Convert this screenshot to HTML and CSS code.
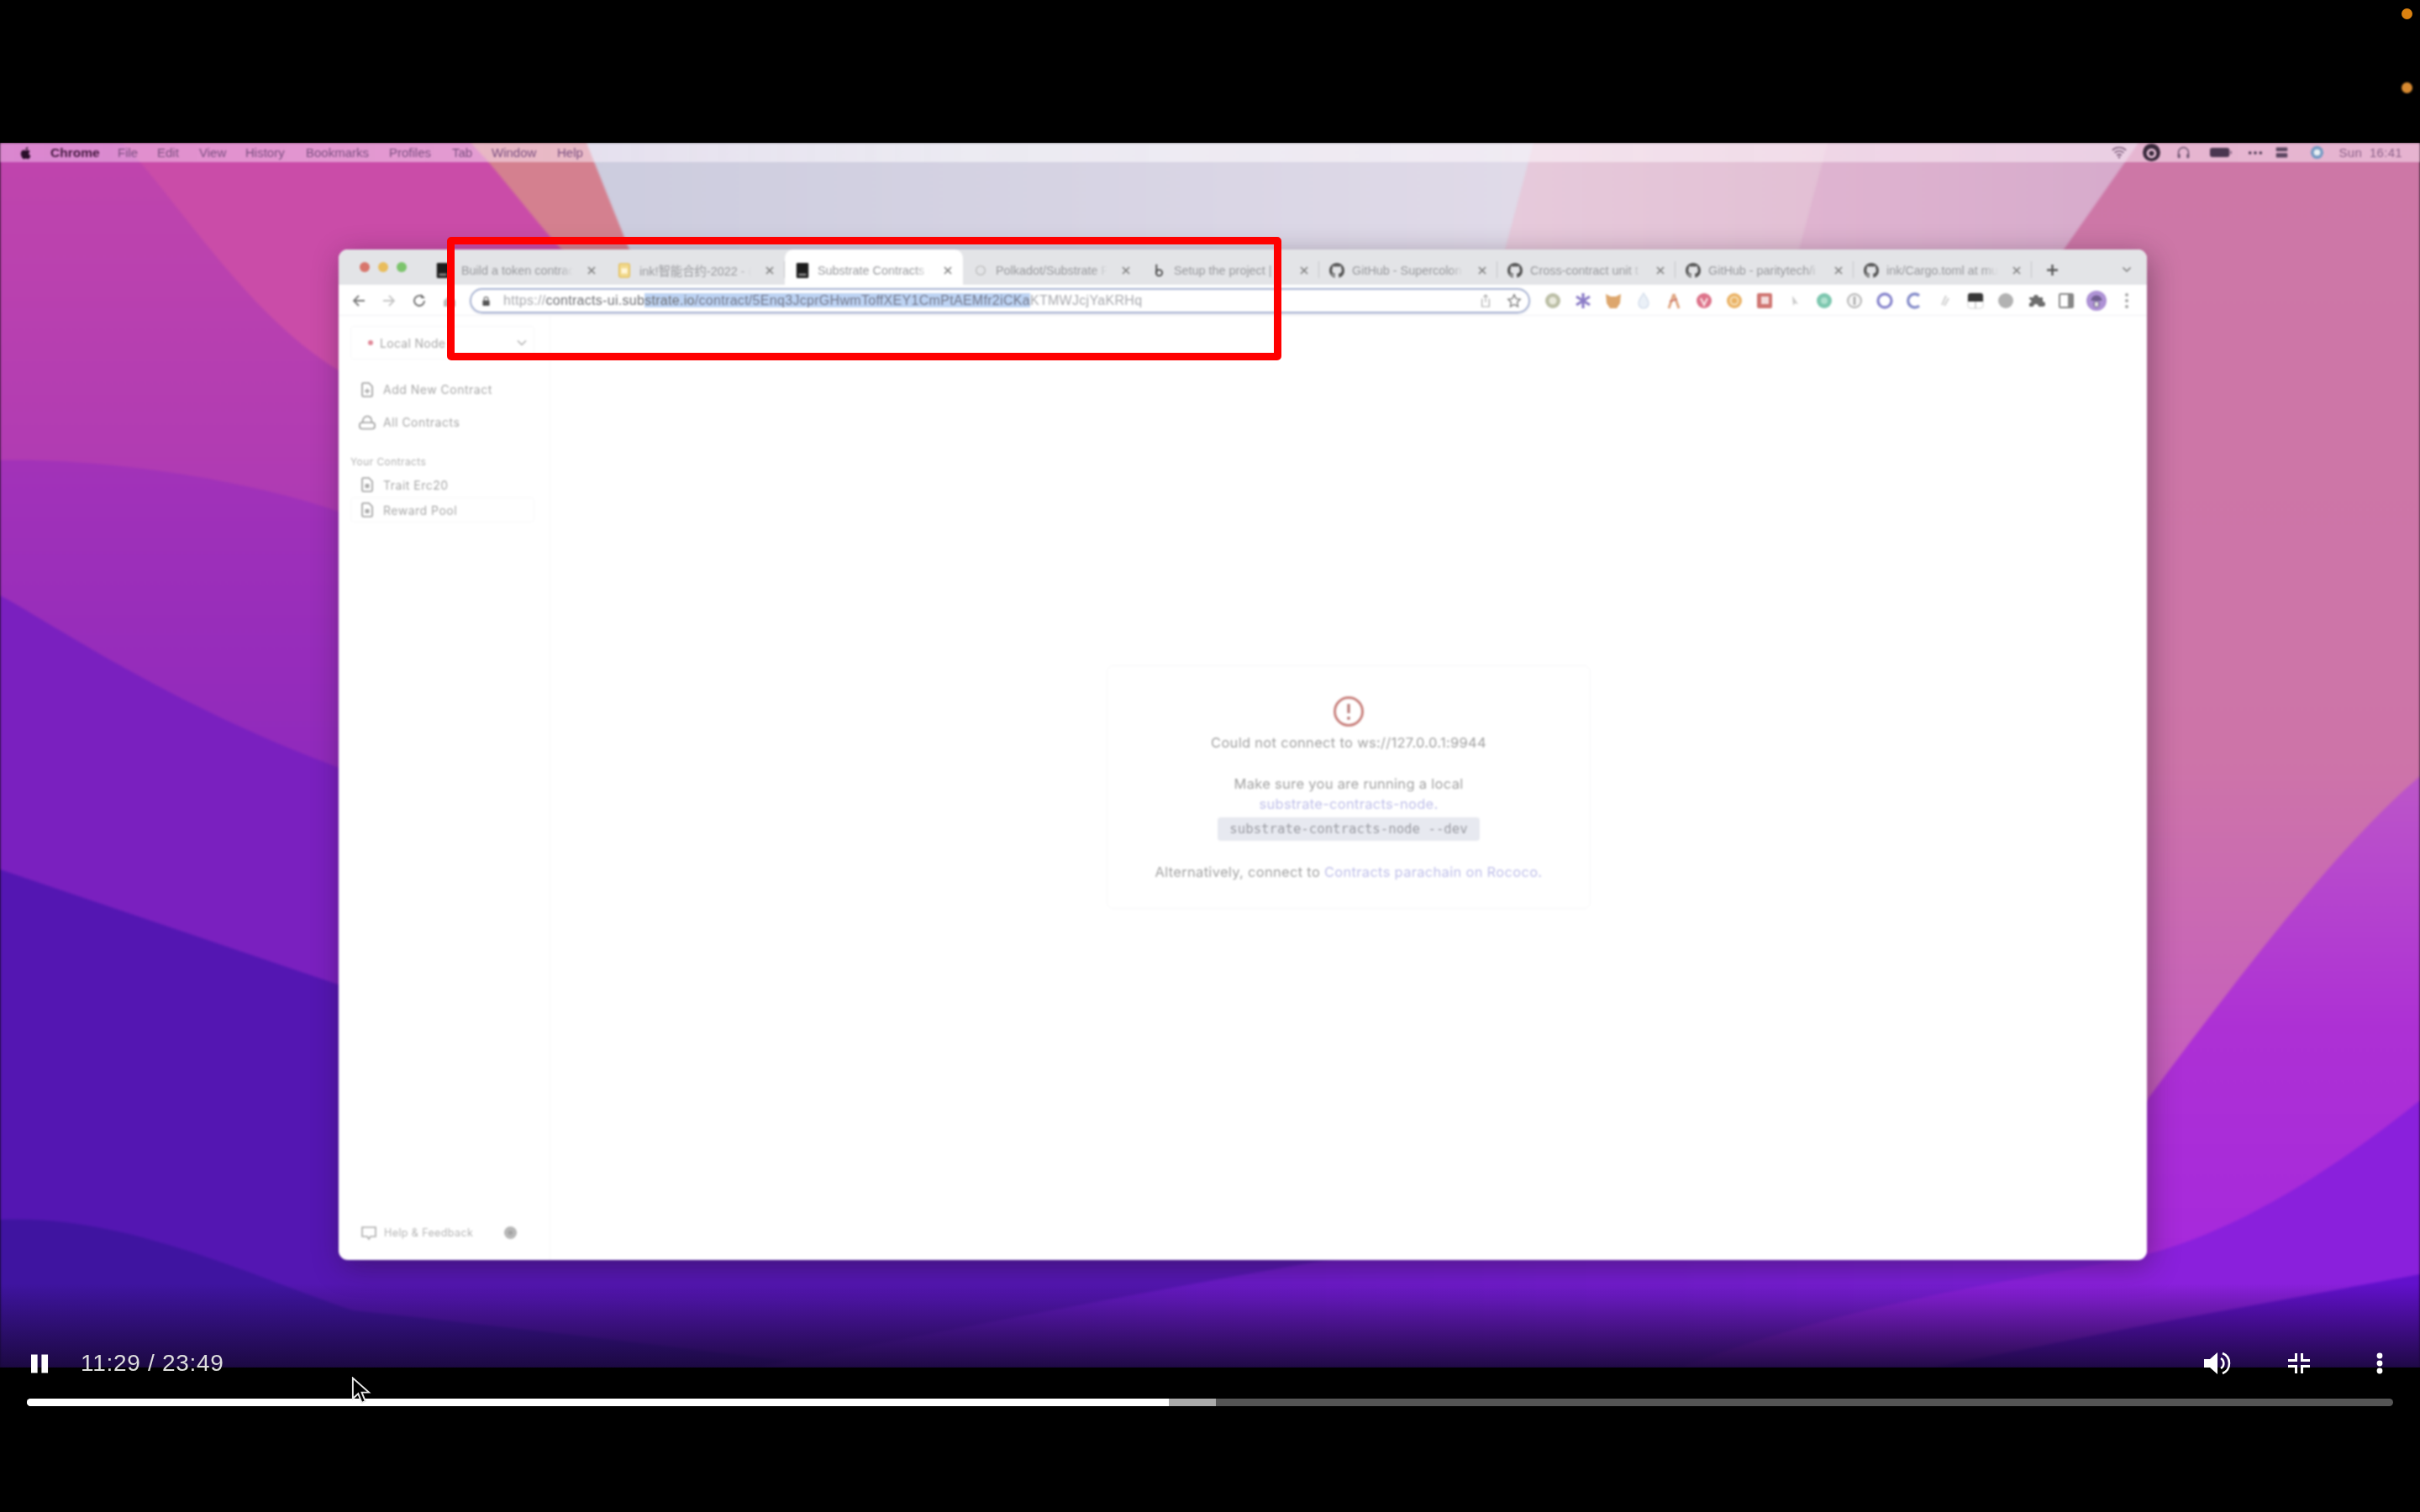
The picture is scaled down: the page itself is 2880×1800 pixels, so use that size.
FILE: index.html
```html
<!DOCTYPE html>
<html lang="en">
<head>
<meta charset="utf-8">
<title>Video player</title>
<link rel="stylesheet" href="styles.css">
</head>
<body>
<svg class="defs" width="0" height="0" aria-hidden="true">
  <symbol id="gh" viewBox="0 0 16 16"><path d="M8 0C3.58 0 0 3.58 0 8c0 3.54 2.29 6.53 5.47 7.59.4.07.55-.17.55-.38 0-.19-.01-.82-.01-1.49-2.01.37-2.53-.49-2.69-.94-.09-.23-.48-.94-.82-1.13-.28-.15-.68-.52-.01-.53.63-.01 1.08.58 1.23.82.72 1.21 1.87.87 2.33.66.07-.52.28-.87.51-1.07-1.78-.2-3.64-.89-3.64-3.95 0-.87.31-1.59.82-2.15-.08-.2-.36-1.02.08-2.12 0 0 .67-.21 2.2.82.64-.18 1.32-.27 2-.27.68 0 1.36.09 2 .27 1.53-1.04 2.2-.82 2.2-.82.44 1.1.16 1.92.08 2.12.51.56.82 1.27.82 2.15 0 3.07-1.87 3.75-3.65 3.95.29.25.54.73.54 1.48 0 1.07-.01 1.93-.01 2.2 0 .21.15.46.55.38A8.013 8.013 0 0016 8c0-4.42-3.58-8-8-8z" fill="#555"/></symbol>
  <symbol id="sub" viewBox="0 0 16 20"><rect width="16" height="20" rx="1.500" fill="#1c1c1c"/><rect x="3" y="14" width="10" height="3" fill="#8a8a8a"/></symbol>
  <symbol id="x" viewBox="0 0 12 12"><path d="M2 2l8 8M10 2l-8 8" stroke="#777" stroke-width="1.500" fill="none"/></symbol>
  <symbol id="doc" viewBox="0 0 20 20"><path d="M4 3.500A1.500 1.500 0 015.500 2H12l4 4v10.500a1.500 1.500 0 01-1.500 1.500h-9A1.500 1.500 0 014 16.500z" fill="none" stroke="#9a9a9a" stroke-width="1.600"/><rect x="7.500" y="9" width="5" height="5" rx="1" fill="#aaa"/></symbol>
</svg>

<main class="video">
  <svg class="wall" viewBox="0 170 2880 1458" preserveAspectRatio="none" aria-hidden="true">
    <defs>
      <linearGradient id="top" gradientUnits="userSpaceOnUse" x1="0" y1="170" x2="0" y2="1628"><stop offset="0" stop-color="#cd77a6"/><stop offset=".5" stop-color="#cd74a8"/><stop offset=".75" stop-color="#c65fbc"/><stop offset="1" stop-color="#c050c8"/></linearGradient>
      <linearGradient id="b2" x1="0" y1="0" x2="0" y2="1"><stop offset="0" stop-color="#c045ac"/><stop offset="1" stop-color="#a232b8"/></linearGradient>
      <linearGradient id="b3" x1="0" y1="0" x2="0" y2="1"><stop offset="0" stop-color="#a232b8"/><stop offset=".6" stop-color="#942bbb"/><stop offset="1" stop-color="#8c28bc"/></linearGradient>
      <linearGradient id="lav" x1="0" y1="0" x2="1" y2="0"><stop offset="0" stop-color="#ccccde"/><stop offset="1" stop-color="#e0dae8"/></linearGradient>
      <linearGradient id="pale" x1="0" y1="0" x2="1" y2="0"><stop offset="0" stop-color="#e6cadb"/><stop offset="1" stop-color="#e2bfd4"/></linearGradient>
      <linearGradient id="pale2" x1="0" y1="0" x2="1" y2="0"><stop offset="0" stop-color="#dfb4d0"/><stop offset="1" stop-color="#d6aacb"/></linearGradient>
      <linearGradient id="r1" x1="0" y1="0" x2="0" y2="1"><stop offset="0" stop-color="#bc56c8"/><stop offset=".5" stop-color="#ad30d4"/><stop offset="1" stop-color="#a528dc"/></linearGradient>
      <linearGradient id="mid" x1="0" y1="0" x2="1" y2="0"><stop offset="0" stop-color="#5a18bc"/><stop offset=".4" stop-color="#6c1ac8"/><stop offset="1" stop-color="#7c1fd8"/></linearGradient>
    </defs>
    <rect x="0" y="170" width="2880" height="1458" fill="url(#top)"/>
    <path d="M0 170H720V700H0Z" fill="#ca4ca8"/>
    <path d="M560 170H700L760 320H690C640 270 600 210 560 170Z" fill="#d4808f"/>
    <path d="M698 170H1830L1790 320H758Z" fill="url(#lav)"/>
    <path d="M1825 170H2180L2140 320H1785Z" fill="url(#pale)"/>
    <path d="M2175 170H2545L2440 320H2135Z" fill="url(#pale2)"/>
    <path d="M0 170H145C200 220 300 390 420 450V900H0Z" fill="url(#b2)"/>
    <path d="M0 548C120 545 300 570 420 615V1000H0Z" fill="url(#b3)"/>
    <path d="M0 709C60 740 200 840 420 920V1200H0Z" fill="#7a20bf"/>
    <path d="M0 1035L420 1178V1400H1900V1628H0Z" fill="#5416b2"/>
    <path d="M0 1452C150 1445 300 1520 420 1560C700 1590 850 1610 1000 1628H0Z" fill="#3f14a0"/>
    <path d="M900 1628C1200 1570 1450 1520 1700 1480H2560V1628Z" fill="url(#mid)"/>
    <path d="M2880 924C2790 1000 2680 1140 2540 1330V1520H2880Z" fill="url(#r1)"/>
    <path d="M2880 1310C2780 1390 2660 1470 2540 1497C2400 1525 2200 1550 2000 1628H2880Z" fill="#8a20dc"/>
    <path d="M2880 1517L2540 1580L2300 1628H2880Z" fill="#6210cc"/>
  </svg>
  <div class="fade"></div>

  <div class="screen">
    <header class="menubar">
      <svg class="apple" viewBox="0 0 24 24"><path d="M16.400 12.800c0-2.300 1.900-3.400 2-3.500-1.100-1.600-2.800-1.800-3.400-1.800-1.400-.1-2.800.9-3.500.9-.7 0-1.900-.8-3.100-.8-1.600 0-3.100.9-3.900 2.300-1.700 2.900-.4 7.200 1.200 9.500.8 1.200 1.800 2.400 3 2.400 1.200 0 1.700-.8 3.100-.8 1.500 0 1.900.8 3.200.8 1.300 0 2.100-1.200 2.900-2.300.9-1.300 1.300-2.600 1.300-2.700 0 0-2.800-1-2.800-4zM14 5.600c.7-.8 1.100-1.900 1-3-.9 0-2.100.6-2.700 1.400-.6.7-1.100 1.800-1 2.900 1 .1 2.100-.5 2.700-1.300z" fill="#2a0f2a"/></svg>
      <b class="menu-app">Chrome</b>
      <span>File</span><span>Edit</span><span>View</span><span>History</span><span>Bookmarks</span><span>Profiles</span><span>Tab</span><span>Window</span><span>Help</span>
      <div class="status">
        <svg class="st st-wifi" viewBox="0 0 20 16"><path d="M1 5a13 13 0 0118 0M4 8.500a8.500 8.500 0 0112 0M7 12a4 4 0 016 0" stroke="#7a5a78" stroke-width="1.800" fill="none"/><circle cx="10" cy="14.500" r="1.300" fill="#7a5a78"/></svg>
        <svg class="st st-circle" viewBox="0 0 22 22"><circle cx="11" cy="11" r="10" fill="#3a2a3c"/><circle cx="11" cy="12" r="5.500" fill="#f0c8e0"/><circle cx="11" cy="12" r="3" fill="#3a2a3c"/></svg>
        <svg class="st st-head" viewBox="0 0 20 20"><path d="M3 15V10a7 7 0 0114 0v5" fill="none" stroke="#6e5470" stroke-width="1.800"/><rect x="2" y="12" width="3.500" height="6" rx="1.500" fill="#6e5470"/><rect x="14.500" y="12" width="3.500" height="6" rx="1.500" fill="#6e5470"/></svg>
        <svg class="st st-batt" viewBox="0 0 28 14"><rect x="0" y="1" width="25" height="12" rx="3" fill="#4a3650"/><rect x="26" y="5" width="2" height="4" fill="#8a6a88"/></svg>
        <svg class="st st-dots" viewBox="0 0 20 6"><circle cx="3" cy="3" r="2" fill="#4a3650"/><circle cx="10" cy="3" r="2" fill="#4a3650"/><circle cx="17" cy="3" r="2" fill="#4a3650"/></svg>
        <svg class="st st-cc" viewBox="0 0 20 18"><rect x="1" y="1" width="18" height="6" rx="1" fill="#5a4560"/><rect x="1" y="10" width="18" height="7" rx="1" fill="#5a4560"/></svg>
        <svg class="st st-siri" viewBox="0 0 20 20"><circle cx="10" cy="10" r="9" fill="#7a9cc4"/><circle cx="10" cy="10" r="4.500" fill="#e8f0f4"/></svg>
        <span class="clock">Sun&nbsp; 16:41</span>
      </div>
    </header>

    <section class="window">
      <div class="tabstrip">
        <div class="lights"><i class="l-r"></i><i class="l-y"></i><i class="l-g"></i></div>
        <div class="tab tab-first"><svg class="fav"><use href="#sub"/></svg><span class="title">Build a token contrac</span><svg class="close"><use href="#x"/></svg></div>
        <div class="tab"><svg class="fav" viewBox="0 0 16 20"><rect x="1" y="1" width="14" height="18" rx="2" fill="#f1d98c" stroke="#e3bd58" stroke-width="1.500"/><rect x="4" y="7" width="8" height="7" fill="#fff6d8"/></svg><span class="title">ink!智能合约-2022 - (</span><svg class="close"><use href="#x"/></svg></div>
        <div class="tab tab-active"><svg class="fav"><use href="#sub"/></svg><span class="title">Substrate Contracts (</span><svg class="close"><use href="#x"/></svg></div>
        <div class="tab"><svg class="fav" viewBox="0 0 20 20"><circle cx="10" cy="10" r="6" fill="none" stroke="#bbb" stroke-width="1.500"/></svg><span class="title">Polkadot/Substrate P</span><svg class="close"><use href="#x"/></svg></div>
        <div class="tab"><svg class="fav" viewBox="0 0 20 20"><path d="M7 2v12" stroke="#444" stroke-width="2" fill="none"/><circle cx="10.500" cy="13" r="4" fill="none" stroke="#444" stroke-width="2"/></svg><span class="title">Setup the project | j</span><svg class="close"><use href="#x"/></svg></div>
        <div class="tab"><svg class="fav"><use href="#gh"/></svg><span class="title">GitHub - Supercolon</span><svg class="close"><use href="#x"/></svg></div>
        <div class="tab"><svg class="fav"><use href="#gh"/></svg><span class="title">Cross-contract unit t</span><svg class="close"><use href="#x"/></svg></div>
        <div class="tab"><svg class="fav"><use href="#gh"/></svg><span class="title">GitHub - paritytech/i</span><svg class="close"><use href="#x"/></svg></div>
        <div class="tab"><svg class="fav"><use href="#gh"/></svg><span class="title">ink/Cargo.toml at mu</span><svg class="close"><use href="#x"/></svg></div>
        <svg class="plus" viewBox="0 0 14 14"><path d="M7 1v12M1 7h12" stroke="#555" stroke-width="2.200"/></svg>
        <svg class="tabs-menu" viewBox="0 0 12 8"><path d="M1.500 1.500L6 6l4.500-4.500" stroke="#777" stroke-width="1.500" fill="none"/></svg>
      </div>

      <div class="toolbar">
        <svg class="nav" viewBox="0 0 20 20"><path d="M17 10H4M10 4l-6 6 6 6" stroke="#777" stroke-width="1.800" fill="none"/></svg>
        <svg class="nav" viewBox="0 0 20 20"><path d="M3 10h13M10 4l6 6-6 6" stroke="#c4c4c4" stroke-width="1.800" fill="none"/></svg>
        <svg class="nav" viewBox="0 0 20 20"><path d="M16 10a6 6 0 11-2-4.500" stroke="#666" stroke-width="1.800" fill="none"/><path d="M12 2v5h5z" fill="#666"/></svg>
        <svg class="nav" viewBox="0 0 20 20"><path d="M3 10l7-6 7 6v7H3z" fill="#bbb"/></svg>
        <div class="address">
          <svg class="lock" viewBox="0 0 12 14"><path d="M3.500 6V4a2.500 2.500 0 015 0v2" stroke="#555" stroke-width="1.200" fill="none"/><rect x="1.500" y="6" width="9" height="7" rx="1" fill="#555"/></svg>
          <span class="url"><span class="u-dim">https://</span><span class="u-host">contracts-ui.sub</span><span class="u-sel"><span class="u-host">strate.io</span>/contract/5Enq3JcprGHwmToffXEY1CmPtAEMfr2iCKa</span><span class="u-dim">KTMWJcjYaKRHq</span></span>
          <svg class="share" viewBox="0 0 16 20"><path d="M8 12V2M5 5l3-3 3 3M4 8H3v10h10V8h-1" stroke="#aaa" stroke-width="1.400" fill="none"/></svg>
          <svg class="star" viewBox="0 0 20 20"><path d="M10 2l2.500 5.300 5.500.7-4 4 1 5.800-5-2.800-5 2.800 1-5.800-4-4 5.500-.7z" stroke="#777" stroke-width="1.500" fill="none"/></svg>
        </div>
        <div class="exts">
          <svg class="ext" viewBox="0 0 22 22"><circle cx="11" cy="11" r="9" fill="#b3b79a"/><circle cx="11" cy="11" r="4.500" fill="#e6e6d8"/></svg>
          <svg class="ext" viewBox="0 0 22 22"><path d="M11 2v18M3 6l16 10M19 6L3 16" stroke="#7d6cc0" stroke-width="3.200"/></svg>
          <svg class="ext" viewBox="0 0 22 22"><path d="M2 3l6 3h6l6-3-1 11-4 6H7l-4-6z" fill="#d99a58"/></svg>
          <svg class="ext" viewBox="0 0 22 22"><path d="M11 2c3 5 6 8 6 12a6 6 0 01-12 0c0-4 3-7 6-12z" fill="#e8eef6" stroke="#c8d4e6" stroke-width="1.200"/></svg>
          <svg class="ext" viewBox="0 0 22 22"><path d="M11 3L5 20M11 3l6 17" stroke="#dc9a70" stroke-width="3"/><path d="M6 12l9-3" stroke="#c96a5a" stroke-width="2"/></svg>
          <svg class="ext" viewBox="0 0 22 22"><circle cx="11" cy="11" r="9" fill="#d9607a"/><path d="M7 8l4 8 4-8" stroke="#f8d8dc" stroke-width="2.400" fill="none"/></svg>
          <svg class="ext" viewBox="0 0 22 22"><circle cx="11" cy="11" r="9" fill="#e8a850"/><circle cx="11" cy="11" r="4.500" fill="none" stroke="#f7deb0" stroke-width="2"/></svg>
          <svg class="ext" viewBox="0 0 22 22"><rect x="2" y="2" width="18" height="18" rx="2" fill="#c9625e"/><rect x="7" y="6" width="9" height="9" fill="#f2d8d8"/></svg>
          <svg class="ext" viewBox="0 0 22 22"><path d="M8 5l7 10-4-1-2 3z" fill="#c4c4c4"/></svg>
          <svg class="ext" viewBox="0 0 22 22"><circle cx="11" cy="11" r="9" fill="#6cc0a4"/><circle cx="11" cy="11" r="4" fill="#a4dcc8"/></svg>
          <svg class="ext" viewBox="0 0 22 22"><circle cx="11" cy="11" r="8" fill="#f4f4f4" stroke="#aaa" stroke-width="2"/><path d="M11 6v10" stroke="#999" stroke-width="2.400"/></svg>
          <svg class="ext" viewBox="0 0 22 22"><circle cx="11" cy="11" r="8" fill="none" stroke="#7a78c8" stroke-width="3.400"/></svg>
          <svg class="ext" viewBox="0 0 22 22"><path d="M16 5a8 8 0 100 12" stroke="#7880c4" stroke-width="3.400" fill="none"/></svg>
          <svg class="ext" viewBox="0 0 22 22"><path d="M7 16L12 5M10 17l5-9" stroke="#d0d0d0" stroke-width="2.400"/></svg>
          <svg class="ext" viewBox="0 0 22 22"><rect x="2" y="2" width="18" height="18" rx="3" fill="#fff" stroke="#ccc"/><path d="M2 5a3 3 0 013-3h12a3 3 0 013 3v7H2z" fill="#1c1c1c"/><path d="M11 12v8" stroke="#999"/></svg>
          <svg class="ext" viewBox="0 0 22 22"><circle cx="11" cy="11" r="9" fill="#a8a8a8"/></svg>
          <svg class="ext" viewBox="0 0 22 22"><path d="M3 7h5a3 3 0 016 0h5v5a3 3 0 010 6H14a3 3 0 00-6 0H3v-4a2.500 2.500 0 000-5z" fill="#5a5a5a"/></svg>
          <svg class="ext" viewBox="0 0 22 22"><rect x="3" y="3" width="16" height="16" rx="1.500" fill="#fff" stroke="#777" stroke-width="2"/><rect x="13" y="3" width="6" height="16" fill="#777"/></svg>
          <svg class="ext ext-avatar" viewBox="0 0 26 26"><circle cx="13" cy="13" r="13" fill="#a384d0"/><path d="M6 13a7 7 0 0114 0" fill="#5e4a82"/><rect x="10" y="14" width="6" height="7" rx="1" fill="#ddd" stroke="#4a3a68"/></svg>
          <svg class="ext" viewBox="0 0 22 22"><circle cx="11" cy="4" r="2" fill="#999"/><circle cx="11" cy="11" r="2" fill="#999"/><circle cx="11" cy="18" r="2" fill="#999"/></svg>
        </div>
      </div>

      <div class="page">
        <aside class="sidebar">
          <div class="network"><i class="net-dot"></i><span>Local Node</span><svg class="net-chev" viewBox="0 0 12 8"><path d="M1 1.500L6 6.500l5-5" stroke="#aaa" stroke-width="1.300" fill="none"/></svg></div>
          <nav class="side-nav">
            <a class="item"><svg class="ico" viewBox="0 0 20 20"><path d="M4 3.500A1.500 1.500 0 015.500 2H12l4 4v10.500a1.500 1.500 0 01-1.500 1.500h-9A1.500 1.500 0 014 16.500z" fill="none" stroke="#9a9a9a" stroke-width="1.600"/><path d="M10 8.500v6M7 11.500h6" stroke="#999" stroke-width="1.400"/></svg>Add New Contract</a>
            <a class="item"><svg class="ico" viewBox="0 0 20 20"><path d="M4.500 10C4.500 5 7 2.500 10 2.500S15.500 5 15.500 10" fill="none" stroke="#9a9a9a" stroke-width="1.600"/><rect x="1" y="10" width="18" height="7.500" rx="3" fill="none" stroke="#9a9a9a" stroke-width="1.600"/></svg>All Contracts</a>
          </nav>
          <h2 class="side-head">Your Contracts</h2>
          <a class="item item-short"><svg class="ico"><use href="#doc"/></svg>Trait Erc20</a>
          <a class="item item-short item-current"><svg class="ico"><use href="#doc"/></svg>Reward Pool</a>
          <div class="side-foot">
            <span class="help"><svg class="ico" viewBox="0 0 20 20"><path d="M2 4h16v11h-6l-2 3-2-3H2z" fill="none" stroke="#aaa" stroke-width="1.600"/></svg>Help &amp; Feedback</span>
            <svg class="gear" viewBox="0 0 18 18"><circle cx="9" cy="9" r="8" fill="#b8b8b8"/><circle cx="9" cy="9" r="3" fill="#a4a4a4"/></svg>
          </div>
        </aside>
        <div class="main">
          <div class="card">
            <svg class="alert" viewBox="0 0 36 36"><circle cx="18" cy="18" r="16.500" fill="none" stroke="#c9827e" stroke-width="3"/><path d="M18 9v11" stroke="#b87a78" stroke-width="3.200"/><circle cx="18" cy="26" r="1.900" fill="#b87a78"/></svg>
            <p class="line l1">Could not connect to ws://127.0.0.1:9944</p>
            <p class="line l2">Make sure you are running a local</p>
            <p class="line l3"><a class="link">substrate-contracts-node.</a></p>
            <code class="cmd">substrate-contracts-node --dev</code>
            <p class="line l4">Alternatively, connect to <a class="link">Contracts parachain on Rococo.</a></p>
          </div>
        </div>
      </div>
    </section>
  </div>

  <div class="redbox"></div>
</main>

<div class="dot dot-a"></div>
<div class="dot dot-b"></div>

<div class="controls">
  <svg class="c-pause" viewBox="0 0 22 23"><rect x="0" y="0" width="8" height="23" fill="#fff"/><rect x="13" y="0" width="8" height="23" fill="#fff"/></svg>
  <span class="c-time">11:29 / 23:49</span>
  <svg class="c-vol" viewBox="0 0 32 28"><path d="M0 9h7l9-8v26l-9-8H0z" fill="#fff"/><path d="M20 8a7 7 0 010 12" stroke="#fff" stroke-width="2.500" fill="none"/><path d="M22 2a13 13 0 010 24" stroke="#fff" stroke-width="2.500" fill="none"/></svg>
  <svg class="c-fs" viewBox="0 0 26 24"><path d="M11 0v10H0V7h8V0zM15 0v10h11V7h-8V0zM11 24V14H0v3h8v7zM15 24V14h11v3h-8v7z" fill="#fff"/></svg>
  <svg class="c-more" viewBox="0 0 8 26"><circle cx="4" cy="4" r="3.400" fill="#fff"/><circle cx="4" cy="13" r="3.400" fill="#fff"/><circle cx="4" cy="22" r="3.400" fill="#fff"/></svg>
</div>
<div class="progress"><div class="buffered"></div><div class="played"></div></div>
<svg class="cursor" viewBox="0 0 22 31"><path d="M1.500 1.500v23l6-5.500 4 10 4-1.700-4-9.800h8z" fill="#000" stroke="#e8e8e8" stroke-width="1.800"/></svg>
</body>
</html>
```
FILE: styles.css
```css
* { box-sizing: border-box; }
html, body { margin: 0; padding: 0; }
body { width: 2880px; height: 1800px; background: #000; position: relative; overflow: hidden; padding-top: 170px; font-family: "Liberation Sans", Arial, sans-serif; }
.defs { position: absolute; }
.video { display: block; position: relative; width: 2880px; height: 1458px; overflow: hidden; }
.wall { position: absolute; inset: 0; width: 100%; height: 100%; filter: blur(1.500px); }
.fade { position: absolute; left: 0; right: 0; bottom: 0; height: 100px; background: linear-gradient(to bottom, rgba(24,8,56,0), rgba(24,8,56,.9)); }
.screen { position: relative; filter: blur(1px); }

/* mac menu bar */
.menubar { height: 23px; display: flex; align-items: center; background: linear-gradient(to right, rgba(255,225,255,.42), rgba(255,255,255,.55) 40%, rgba(255,240,250,.5)); color: #7b4f80; font-size: 15px; padding-left: 22px; }
.apple { width: 18px; height: 18px; margin-right: 20px; }
.menu-app { color: #43173f; font-size: 15.500px; width: 80px; }
.menubar > span:nth-of-type(1) { width: 47px; }
.menubar > span:nth-of-type(2) { width: 50px; }
.menubar > span:nth-of-type(3) { width: 55px; }
.menubar > span:nth-of-type(4) { width: 72px; }
.menubar > span:nth-of-type(5) { width: 99px; }
.menubar > span:nth-of-type(6) { width: 75px; }
.menubar > span:nth-of-type(7) { width: 47px; }
.menubar > span:nth-of-type(8) { width: 78px; }
.status { margin-left: auto; padding-right: 21px; display: flex; align-items: center; height: 23px; }
.st { flex: none; }
.st-wifi { width: 18px; height: 15px; margin-right: 18px; }
.st-circle { width: 23px; height: 23px; margin-right: 18px; }
.st-head { width: 17px; height: 17px; margin-right: 22px; }
.st-batt { width: 28px; height: 13px; margin-right: 18px; }
.st-dots { width: 18px; height: 6px; margin-right: 15px; }
.st-cc { width: 15px; height: 15px; margin-right: 26px; }
.st-siri { width: 17px; height: 17px; margin-right: 17px; }
.clock { color: #8a6088; font-size: 15px; white-space: nowrap; letter-spacing: .3px; }

/* browser window */
.window { width: 2152px; height: 1203px; margin: 104px 0 0 403px; background: #fff; border-radius: 11px; box-shadow: 4px 8px 34px rgba(40,20,40,.42); display: flex; flex-direction: column; overflow: hidden; }
.tabstrip { height: 42px; flex: none; background: #e3e4e7; display: flex; align-items: center; position: relative; padding-left: 107px; }
.lights { position: absolute; left: 25px; top: 15px; display: flex; gap: 10px; }
.lights i { display: block; width: 12px; height: 12px; border-radius: 50%; }
.l-r { background: #d8766c; }
.l-y { background: #e9bd5c; }
.l-g { background: #7cc46c; }
.tab { width: 212px; height: 42px; flex: none; padding: 7px 11px 0 12px; display: flex; align-items: center; gap: 9px; position: relative; }
.tab::after { content: ""; position: absolute; right: 0; top: 14px; height: 20px; width: 1px; background: #c4c5c9; }
.tab:nth-of-type(2)::after, .tab-active::after, .tab-active + .tab::after { background: transparent; }
.tab-active { background: #fff; border-radius: 10px 10px 0 0; }
.tab-first .fav { margin-left: -4px; margin-right: 4px; }
.fav { width: 18px; height: 18px; flex: none; }
.title { width: 133px; flex: none; white-space: nowrap; font-size: 14.400px; color: #98999d; font-family: "Liberation Sans", "Noto Sans CJK SC", sans-serif; -webkit-mask-image: linear-gradient(to right, #000 88%, transparent); mask-image: linear-gradient(to right, #000 88%, transparent); }
.close { width: 12px; height: 12px; flex: none; margin-left: 7px; }
.plus { width: 15px; height: 15px; margin: 6px 0 0 17px; flex: none; }
.tabs-menu { width: 12px; height: 8px; margin: 6px 0 0 75px; flex: none; }

.toolbar { height: 37px; flex: none; background: #fff; border-bottom: 1px solid #f1f1f3; display: flex; align-items: center; gap: 16px; padding: 2px 0 0 14px; }
.nav { width: 20px; height: 20px; flex: none; }
.address { width: 1262px; height: 30px; margin-left: -2px; border: 2px solid #a8b3d2; border-radius: 15px; display: flex; align-items: center; padding-left: 12px; flex: none; box-shadow: 0 1px 2px rgba(120,130,170,.3); }
.lock { width: 11px; height: 13px; flex: none; margin-right: 15px; }
.url { font-size: 16px; white-space: nowrap; color: #a2a3a8; flex: 1; letter-spacing: .3px; }
.u-host { color: #6e6f74; }
.u-sel { background: #bdd3f3; color: #74798c; }
.u-dim { color: #a8a9ae; }
.share { width: 14px; height: 18px; margin-right: 18px; flex: none; }
.star { width: 18px; height: 18px; margin-right: 8px; flex: none; }
.exts { display: flex; align-items: center; gap: 13.950px; opacity: .88; }
.ext { width: 22px; height: 22px; flex: none; }
.ext-avatar { width: 24px; height: 24px; margin: 0 -1px; }

/* app */
.page { flex: 1; display: flex; min-height: 0; }
.sidebar { width: 252px; flex: none; border-right: 1px solid #f7f7f9; padding: 12px 18px 21px 14px; display: flex; flex-direction: column; font-family: Inter, "Liberation Sans", sans-serif; color: #a8a8a8; font-size: 14px; }
.network { height: 40px; flex: none; border: 1px solid #f7f7f8; border-radius: 4px; display: flex; align-items: center; padding: 0 8px 0 20px; }
.net-dot { width: 6px; height: 6px; border-radius: 50%; background: #e08898; margin-right: 8px; }
.network span { flex: 1; letter-spacing: .3px; }
.net-chev { width: 12px; height: 8px; }
.side-nav { margin-top: 16px; display: flex; flex-direction: column; }
.item { height: 39px; flex: none; display: flex; align-items: center; gap: 9px; padding-left: 10px; letter-spacing: .5px; }
.item-short { height: 30px; }
.item-current { border: 1px solid #f8f8f9; border-radius: 4px; padding-left: 9px; }
.ico { width: 20px; height: 20px; flex: none; }
.side-head { margin: 20px 0 4px; height: 16px; font-size: 12px; line-height: 16px; font-weight: 400; color: #b0b0b0; letter-spacing: .4px; }
.side-foot { margin-top: auto; height: 24px; display: flex; align-items: center; justify-content: space-between; padding: 0 20px 0 12px; font-size: 12.500px; color: #b4b4b4; }
.help { display: flex; align-items: center; gap: 8px; letter-spacing: .4px; }
.gear { width: 17px; height: 17px; }
.main { flex: 1; display: flex; align-items: center; justify-content: center; padding-bottom: 2px; }
.card { width: 576px; height: 290px; border: 1px solid #f7f7f8; border-radius: 8px; padding-top: 36px; display: flex; flex-direction: column; align-items: center; font-family: Inter, "Liberation Sans", sans-serif; font-size: 16.500px; letter-spacing: .3px; color: #a2a2a2; }
.alert { width: 36px; height: 36px; flex: none; }
.line { margin: 0; height: 20px; line-height: 20px; white-space: nowrap; }
.l1 { margin-top: 9px; }
.l2 { margin-top: 29px; }
.l3 { margin-top: 4px; }
.l4 { margin-top: 27px; }
.link { color: #c0c0ea; }
.cmd { margin-top: 6px; height: 28px; line-height: 28px; padding: 0 14px; background: #e7e9f0; border-radius: 4px; font-family: "DejaVu Sans Mono", "Liberation Mono", monospace; font-size: 15.700px; letter-spacing: 0; color: #9a9ba2; }

/* overlays */
.redbox { position: absolute; left: 532px; top: 112px; width: 993px; height: 147px; border: 9px solid #f00; border-radius: 5px; }
.dot { position: absolute; left: 2858px; width: 13px; height: 13px; border-radius: 50%; background: #dc8210; }
.dot-a { top: 10px; }
.dot-b { top: 98px; background: #d88a30; filter: blur(1px); }
.controls { position: absolute; left: 0; top: 1605px; width: 2880px; height: 36px; display: flex; align-items: center; filter: blur(.5px); }
.c-pause { width: 21px; height: 23px; margin-left: 37px; flex: none; }
.c-time { margin-left: 38px; color: #dedede; font-size: 28px; letter-spacing: .7px; white-space: nowrap; width: 2527px; flex: none; }
.c-vol { width: 32px; height: 28px; flex: none; }
.c-fs { width: 26px; height: 24px; margin-left: 68px; flex: none; }
.c-more { width: 8px; height: 26px; margin-left: 79px; flex: none; }
.progress { position: absolute; left: 32px; top: 1665px; width: 2816px; height: 9px; border-radius: 5px; background: #555; overflow: hidden; }
.buffered { position: absolute; left: 0; top: 0; height: 9px; width: 1415px; background: #aaa; }
.played { position: absolute; left: 0; top: 0; height: 9px; width: 1359px; background: #fff; }
.cursor { position: absolute; left: 418px; top: 1639px; width: 24px; height: 33px; }
```
